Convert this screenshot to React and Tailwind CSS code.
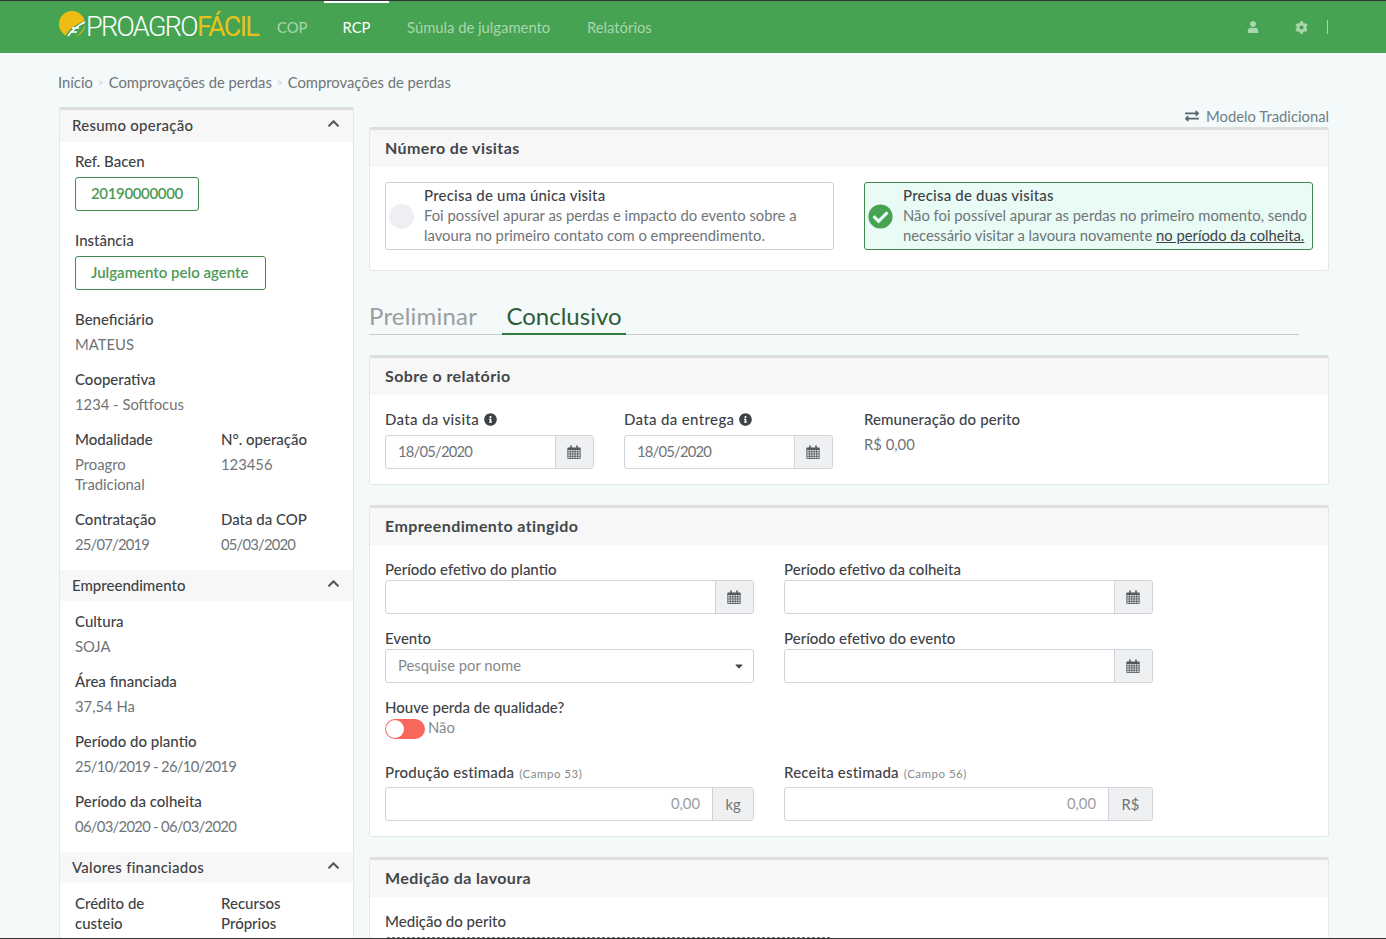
import React from "react";
import { FaChevronUp, FaInfoCircle, FaCheckCircle, FaExchangeAlt, FaUser, FaCog, FaCaretDown } from "react-icons/fa";

const Cal = () => (
  <svg width="14" height="14" viewBox="0 0 14 14" className="text-[#55595c] -ml-[2px]">
    <path fill="currentColor" d="M1 2.500h2.200V1a.8.8 0 0 1 1.600 0v1.500h4.400V1a.8.8 0 0 1 1.600 0v1.500H13a.6.6 0 0 1 .6.6v1.900H.4V3.100A.6.6 0 0 1 1 2.500z" />
    <path stroke="currentColor" strokeWidth="0.85" fill="none" d="M.8 4.500h12.400v9H.8zM.8 6.800h12.400M.8 9h12.400M.8 11.300h12.400M3.300 4.500v9M5.800 4.500v9M8.200 4.500v9M10.700 4.500v9" />
  </svg>
);

const Label = ({ children, className = "" }) => (
  <div className={`h-5 leading-[18px] text-[15px] text-[#3e4246] font-medium whitespace-nowrap ${className}`}>{children}</div>
);

const Field = ({ label, value, valueClass = "", className = "" }) => (
  <div className={`pb-[15px] ${className}`}>
    <Label>{label}</Label>
    <div className={`mt-[5px] text-[#6f7478] leading-5 -translate-y-px ${valueClass}`}>{value}</div>
  </div>
);

const SideHead = ({ children, first, track = "" }) => (
  <div className={`flex items-center justify-between bg-[#f7f7f7] pl-3 pr-[13px] ${first ? "h-8 pb-px" : "h-[31px]"}`}>
    <span className={`text-[#3e4246] text-[15px] font-medium ${track}`}>{children}</span>
    <FaChevronUp className="text-[#555] text-[13px] -mt-1" />
  </div>
);

const Tag = ({ children, className = "" }) => (
  <div className={`inline-flex h-[34px] items-center pl-[15px] pb-[2px] border border-[#43894c] rounded-[3px] text-[#4d9a57] font-semibold text-[15px] ${className}`}>{children}</div>
);

const Card = ({ title, children, className = "" }) => (
  <section className={`bg-white border border-[#e6e8e8] border-t-[3px] border-t-[#dedede] rounded-[3px] ${className}`}>
    <div className="h-[37px] bg-[#f7f7f7] pl-[15px] pb-[2px] flex items-center">
      <h2 className="text-[16px] font-bold text-[#43474b] tracking-[0.4px]">{title}</h2>
    </div>
    <div className="px-[15px]">{children}</div>
  </section>
);

const DateInput = ({ value, addon = <Cal />, addonWidth = "w-[38px]", right }) => (
  <div className="flex h-[34px] border border-[#ced4da] rounded-[3px] overflow-hidden bg-white">
    <div className={`flex-1 flex items-center px-3 pb-[2px] ${right ? "justify-end text-[#9a9ea1]" : "text-[#6f7478] tracking-[-0.8px]"}`}>{value}</div>
    <div className={`${addonWidth} flex items-center justify-center bg-[#eff0f2] border-l border-[#ced4da] text-[#6f7478]`}>{addon}</div>
  </div>
);

const Option = ({ selected, title, children }) => (
  <div className={`flex h-[68px] items-center rounded-[3px] border pl-[3px] pb-[2px] ${selected ? "border-[#43894c] bg-[#e8fbf5]" : "border-[#cfd2d4] bg-white"}`}>
    {selected ? (
      <FaCheckCircle className="w-[25px] h-[25px] text-[#46a351] shrink-0 mt-[2px]" />
    ) : (
      <div className="w-[25px] h-[25px] rounded-full bg-[#eeeff2] shrink-0 mt-[2px]" />
    )}
    <div className="ml-[10px] text-[#6f7478] leading-5 whitespace-nowrap">
      <div className="text-[#3e4246] text-[15px] font-medium tracking-[0.2px]">{title}</div>
      {children}
    </div>
  </div>
);

export default function App() {
  return (
    <div className="h-[939px] overflow-hidden bg-[#f4f9f9] text-[14.800px] border-b border-[#333]" style={{ fontFamily: '"Lato", "Noto Sans", sans-serif' }}>
      <header className="h-[53px] bg-[#46a351] border-t border-[#333] flex items-center pl-[59px] pr-[58px]">
        <div className="flex items-center w-[218px] shrink-0 h-full">
          <svg width="30" height="30" viewBox="0 0 30 30" className="shrink-0 -mt-[4px]">
            <circle cx="13" cy="14" r="13" fill="#eebc12" />
            <path d="M6 28C8 21 13 16 28 10 25 18 21 27 12 28" fill="#46a351" />
            <path d="M9 26C13 20 18 16 26 12M13 18h7M11 22h7" stroke="#fff" strokeWidth="1.600" fill="none" />
          </svg>
          <span className="-ml-[3px] text-[27px] leading-none font-light tracking-[-1.650px] text-white whitespace-nowrap" style={{ fontFamily: '"Roboto", sans-serif' }}>
            PROAGRO<span className="text-[#e8c21c] font-normal">FÁCIL</span>
          </span>
        </div>
        <nav className="flex items-center text-[#aad6ae]">
          <a className="w-[47px]">COP</a>
          <a className="relative w-[65px] h-[52px] flex items-center justify-center text-white">
            RCP
            <span className="absolute top-0 inset-x-0 h-[2px] bg-white" />
          </a>
          <a className="ml-[18px] w-[180px]">Súmula de julgamento</a>
          <a>Relatórios</a>
        </nav>
        <div className="ml-auto flex items-center text-[#aad6ae]">
          <FaUser className="text-[12px]" />
          <FaCog className="text-[13px] ml-[36px]" />
          <span className="ml-[19px] h-[14px] w-px bg-[#aad6ae]" />
        </div>
      </header>

      <div className="h-[54px] pl-[58px] flex items-center text-[#6f7478] pt-[4px]">
        Início<span className="mx-[5px] text-[10px] text-[#c3c7c9]">&gt;</span>Comprovações de perdas<span className="mx-[5px] text-[10px] text-[#c3c7c9]">&gt;</span>Comprovações de perdas
      </div>

      <div className="flex items-start pl-[59px] pr-[57px]">
        <aside className="w-[295px] shrink-0 bg-white border border-[#e6e8e8] border-t-[3px] border-t-[#dedede] rounded-[3px]">
          <SideHead first track="tracking-[0.25px]">Resumo operação</SideHead>
          <div className="pl-[15px] pt-[10px]">
            <Label>Ref. Bacen</Label>
            <div className="mt-[5px]"><Tag className="w-[124px] tracking-[-0.350px]">20190000000</Tag></div>
            <div className="mt-5"><Label>Instância</Label></div>
            <div className="mt-[5px]"><Tag className="w-[191px]">Julgamento pelo agente</Tag></div>
            <div className="mt-5" />
            <Field label="Beneficiário" value="MATEUS" />
            <Field label="Cooperativa" value="1234 - Softfocus" />
            <div className="grid grid-cols-[146px_1fr]">
              <Field label="Modalidade" value={<>Proagro<br />Tradicional</>} />
              <Field label="N°. operação" value="123456" />
              <Field label="Contratação" value="25/07/2019" valueClass="tracking-[-0.8px]" />
              <Field label="Data da COP" value="05/03/2020" valueClass="tracking-[-0.8px]" />
            </div>
          </div>
          <SideHead>Empreendimento</SideHead>
          <div className="pl-[15px] pt-[11px]">
            <Field label="Cultura" value="SOJA" />
            <Field label="Área financiada" value="37,54 Ha" />
            <Field label="Período do plantio" value="25/10/2019 - 26/10/2019" valueClass="tracking-[-0.7px]" />
            <Field label="Período da colheita" value="06/03/2020 - 06/03/2020" valueClass="tracking-[-0.7px]" />
          </div>
          <SideHead track="tracking-[0.25px]">Valores financiados</SideHead>
          <div className="pl-[15px] pt-[11px] pb-6 grid grid-cols-[146px_1fr] text-[15px] font-medium text-[#3e4246]">
            <div className="leading-5 -translate-y-px">Crédito de<br />custeio</div>
            <div className="leading-5 -translate-y-px">Recursos<br />Próprios</div>
          </div>
        </aside>

        <main className="ml-[15px] flex-1 min-w-0">
          <div className="h-5 pb-[2px] flex items-center justify-end text-[#6f7f88]">
            <FaExchangeAlt className="text-[14px] text-[#55656e] mr-[7px]" />Modelo Tradicional
          </div>
          <Card title="Número de visitas">
            <div className="grid grid-cols-2 gap-x-[30px] pt-[15px] pb-[20px]">
              <Option title="Precisa de uma única visita">Foi possível apurar as perdas e impacto do evento sobre a<br />lavoura no primeiro contato com o empreendimento.</Option>
              <Option selected title="Precisa de duas visitas">Não foi possível apurar as perdas no primeiro momento, sendo<br />necessário visitar a lavoura novamente <u className="text-[#3e4246]">no período da colheita.</u></Option>
            </div>
          </Card>

          <div className="mt-[22px] w-[930px] h-[42px] border-b border-[#c9cccc] flex items-end text-[24px]">
            <div className="text-[#9a9ea1] tracking-[0.2px] leading-[36px] w-[133px]">Preliminar</div>
            <div className="text-[#2f5d3a] h-[42px] w-[124px] -mb-px border-b-2 border-[#2e7d3c] text-center pt-[3px] leading-[40px]">Conclusivo</div>
          </div>

          <Card title="Sobre o relatório" className="mt-[20px]">
            <div className="grid grid-cols-[209px_209px_1fr] gap-x-[30px] pt-[15px] pb-[15px]">
              <div>
                <div className="flex gap-[5px]"><Label className="tracking-[0.35px]">Data da visita</Label><FaInfoCircle className="text-[#3e4246] text-[13px] mt-[3px]" /></div>
                <div className="mt-[5px]"><DateInput value="18/05/2020" /></div>
              </div>
              <div>
                <div className="flex gap-[5px]"><Label className="tracking-[0.35px]">Data da entrega</Label><FaInfoCircle className="text-[#3e4246] text-[13px] mt-[3px]" /></div>
                <div className="mt-[5px]"><DateInput value="18/05/2020" /></div>
              </div>
              <div className="ml-px">
                <Label className="tracking-[0.1px]">Remuneração do perito</Label>
                <div className="mt-[5px] leading-5 text-[#6f7478] -translate-y-px">R$ 0,00</div>
              </div>
            </div>
          </Card>

          <Card title="Empreendimento atingido" className="mt-[20px]">
            <div className="grid grid-cols-[369px_369px] gap-x-[30px] pt-[15px] pb-[15px]">
              <div>
                <Label>Período efetivo do plantio</Label>
                <DateInput />
              </div>
              <div>
                <Label>Período efetivo da colheita</Label>
                <DateInput />
              </div>
              <div className="mt-[15px]">
                <Label>Evento</Label>
                <div className="h-[34px] px-3 pb-[2px] flex items-center justify-between border border-[#ced4da] rounded-[3px] text-[#85898c]">
                  Pesquise por nome
                  <FaCaretDown className="text-[#444] text-[12px] -mr-[4px] mt-[2px]" />
                </div>
              </div>
              <div className="mt-[15px]">
                <Label>Período efetivo do evento</Label>
                <DateInput />
              </div>
              <div className="col-span-2 mt-[15px]">
                <Label>Houve perda de qualidade?</Label>
                <div className="flex items-center mt-px">
                  <div className="w-10 h-5 rounded-full bg-[#f8675c] p-[1px]">
                    <div className="w-[18px] h-[18px] rounded-full bg-white" />
                  </div>
                  <span className="ml-[3px] text-[#85898c] leading-5 -translate-y-[2px]">Não</span>
                </div>
              </div>
              <div className="mt-[24px]">
                <div className="flex items-baseline"><Label className="tracking-[0.2px]">Produção estimada</Label><span className="ml-[5px] text-[11.500px] text-[#85898c] tracking-[0.5px]">(Campo 53)</span></div>
                <div className="mt-[4px]"><DateInput right value="0,00" addon="kg" addonWidth="w-[41px]" /></div>
              </div>
              <div className="mt-[24px]">
                <div className="flex items-baseline"><Label className="tracking-[0.2px]">Receita estimada</Label><span className="ml-[5px] text-[11.500px] text-[#85898c] tracking-[0.5px]">(Campo 56)</span></div>
                <div className="mt-[4px]"><DateInput right value="0,00" addon="R$" addonWidth="w-[44px]" /></div>
              </div>
            </div>
          </Card>

          <Card title="Medição da lavoura" className="mt-[20px]">
            <div className="pt-[15px]">
              <Label>Medição do perito</Label>
              <div className="mt-[5px] w-[443px] ml-[2px] border-t border-dashed border-[#777]" />
            </div>
          </Card>
        </main>
      </div>
    </div>
  );
}
